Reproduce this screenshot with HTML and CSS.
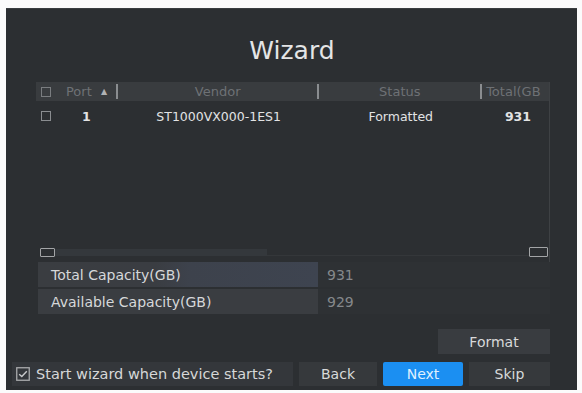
FILE: index.html
```html
<!DOCTYPE html>
<html>
<head>
<meta charset="utf-8">
<link rel="stylesheet" href="styles.css">
</head>
<body>
<div class="panel">
  <h1 class="title">Wizard</h1>
  <div class="table">
    <div class="thead">
      <div class="c-chk"><span class="box hbox"></span></div>
      <div class="c-port">Port <span class="arrow">▲</span></div>
      <div class="c-vendor">Vendor</div>
      <div class="c-status">Status</div>
      <div class="c-total">Total(GB</div>
    </div>
    <div class="trow">
      <div class="c-chk"><span class="box"></span></div>
      <div class="c-port num">1</div>
      <div class="c-vendor">ST1000VX000-1ES1</div>
      <div class="c-status">Formatted</div>
      <div class="c-total num r">931</div>
    </div>
    <div class="tbody-fill"></div>
    <div class="hscroll">
      <span class="sbox"></span>
      <span class="sthumb"></span>
      <span class="sspace"></span>
      <span class="sbox sbox-r"></span>
    </div>
  </div>
  <div class="info">
    <div class="irow">
      <div class="ilabel blue">Total Capacity(GB)</div>
      <div class="ivalue">931</div>
    </div>
    <div class="irow">
      <div class="ilabel">Available Capacity(GB)</div>
      <div class="ivalue">929</div>
    </div>
  </div>
  <div class="fmt-row">
    <button class="btn fmt">Format</button>
  </div>
  <div class="bottom">
    <label class="startchk">
      <svg class="cbox" width="14" height="14" viewBox="0 0 14 14"><rect x="0.75" y="0.75" width="12.5" height="12.5" fill="none" stroke="#a9abad" stroke-width="1.3"/><path d="M3.2 7.2 L5.8 9.6 L10.8 4.2" fill="none" stroke="#c9cbcd" stroke-width="1.4"/></svg>
      <span>Start wizard when device starts?</span>
    </label>
    <button class="btn back">Back</button>
    <button class="btn next">Next</button>
    <button class="btn skip">Skip</button>
  </div>
</div>
</body>
</html>
```
FILE: styles.css
```css
* { box-sizing: border-box; }
html, body { margin: 0; padding: 0; background: #fbfbfb; }
body {
  width: 582px; height: 393px;
  font-family: "DejaVu Sans", "Liberation Sans", sans-serif;
  padding: 8px 5px 3px 6px;
}
.panel {
  width: 571px; height: 382px;
  background: #2c2f32;
  border-top: 1px solid #3a3d40;
  display: flex; flex-direction: column;
  padding: 0 27px 0 6px;
  position: relative;
}
.title {
  margin: 0; height: 73px;
  padding-top: 26px;
  text-align: center;
  font-size: 25px; font-weight: normal;
  color: #e4e5e6;
  line-height: 32px;
  padding-left: 22px;
}
.table {
  margin-left: 24px;
  width: 514px;
  height: 180px;
  border-right: 1px solid #3e4144;
  display: flex; flex-direction: column;
}
.thead {
  height: 19px; background: #393c3f;
  display: flex; align-items: center;
  font-size: 13px; color: #6e7175;
}
.trow {
  height: 28px; display: flex; align-items: center;
  font-size: 12.5px; color: #e2e3e4;
  padding-top: 2px;
}
.c-chk { width: 24px; padding-left: 5px; display: flex; align-items: center; }
.c-port { width: 58px; padding-left: 6px; border-right: 2px solid transparent; }
.thead .c-port { border-right-color: #8a8d90; height: 15px; line-height: 15px; }
.c-vendor { width: 202px; text-align: center; }
.thead .c-vendor { border-right: 2px solid #8a8d90; height: 15px; line-height: 15px; }
.c-status { width: 163px; text-align: center; }
.thead .c-status { border-right: 2px solid #8a8d90; height: 15px; line-height: 15px; }
.c-total { width: 67px; padding-left: 4px; overflow: hidden; white-space: nowrap; }
.thead .c-total { height: 15px; line-height: 15px; }
.num { font-weight: bold; }
.trow .c-port { padding-left: 22px; }
.r { text-align: right; padding-right: 18px; }
.arrow { font-size: 8px; color: #b0b2b4; margin-left: 5px; vertical-align: 2px; }
.box {
  display: inline-block; width: 10px; height: 10px;
  border: 1.3px solid #8a8d90;
}
.hbox { border-color: #7a7d80; }
.tbody-fill { flex: 1; }
.hscroll {
  height: 12px; display: flex; align-items: center;
  margin-bottom: 4px; padding: 0 0 0 4px;
}
.sbox { width: 15px; height: 9px; border: 1.5px solid #a3a5a7; border-radius: 1px; }
.sbox-r { width: 19px; height: 10px; margin-right: 1px; }
.sthumb { width: 212px; height: 7px; background: #34383c; }
.sspace { flex: 1; height: 7px; border-bottom: 1px solid #34373a; }
.info {
  margin-left: 26px; width: 512px;
  display: flex; flex-direction: column; gap: 2px;
  margin-top: 0px;
}
.irow { height: 25px; display: flex; align-items: center; }
.ilabel {
  width: 280px; height: 100%;
  background: #3a3d41; color: #d6d8da;
  font-size: 14px; padding-left: 13px;
  display: flex; align-items: center;
  white-space: nowrap;
}
.ilabel.blue { background: linear-gradient(90deg, #3a3d41 0%, #3a3d42 42%, #3d424c 54%, #3e4450 100%); }
.ivalue {
  flex: 1; height: 100%; color: #85888b; font-size: 14px;
  padding-left: 9px; display: flex; align-items: center;
  background: #2e3134;
}
.fmt-row {
  display: flex; justify-content: flex-end;
  margin-top: 15px; width: 538px;
}
.btn {
  border: none; font-family: inherit; font-size: 14px;
  color: #d8d9da; background: #393c40;
  height: 25px; padding: 0; cursor: default;
}
.fmt { width: 112px; }
.bottom {
  display: flex; align-items: center; gap: 6px;
  margin-top: 8px;
  height: 24px;
}
.startchk {
  width: 281px; height: 100%;
  background: #34373b; margin-left: 0;
  display: flex; align-items: center; gap: 6px;
  padding-left: 4px;
  font-size: 14.5px; color: #d6d7d8; white-space: nowrap;
}
.cbox { flex: none; }
.back { width: 78px; margin-left: 0px; background: #36393c; height: 24px; }
.next { width: 80px; background: #1b8ff2; color: #dff0ff; height: 24px; border-radius: 2px; }
.skip { width: 81px; background: #36393c; height: 24px; }
```
